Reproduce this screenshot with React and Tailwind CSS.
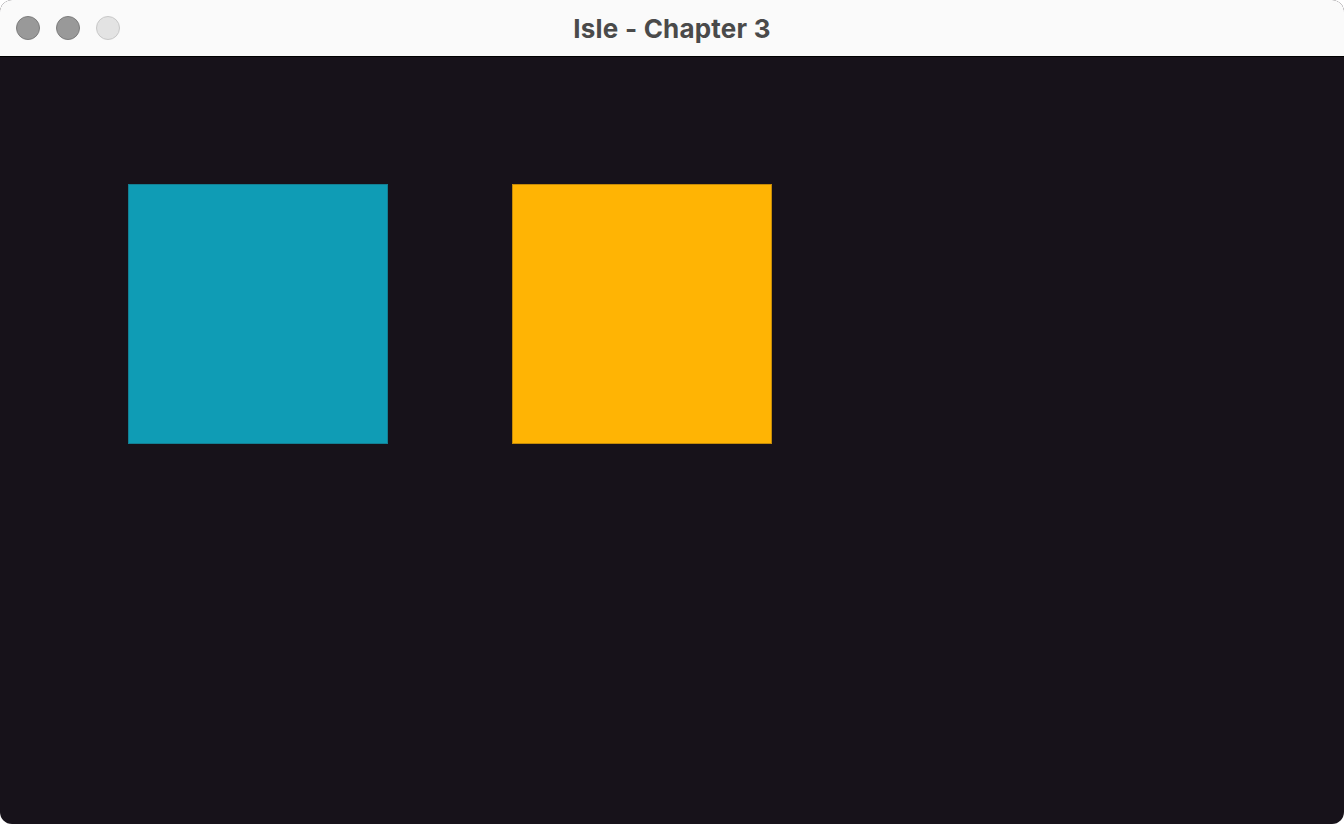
export default function App() {
  return (
    <div className="w-[1344px] h-[824px] bg-white">
      <div className="flex h-full flex-col overflow-hidden rounded-[12px] bg-[#17121a]">
        <div className="relative flex h-[57px] shrink-0 items-center justify-center border-b border-black bg-[#fafafa]">
          <div className="absolute left-[16px] top-[16px] flex gap-[16px]">
            <div className="h-[24px] w-[24px] rounded-full border border-[#7d7d7d] bg-[#999999]"></div>
            <div className="h-[24px] w-[24px] rounded-full border border-[#7d7d7d] bg-[#999999]"></div>
            <div className="h-[24px] w-[24px] rounded-full border border-[#c8c8c8] bg-[#e3e3e3]"></div>
          </div>
          <h1 className="font-['Inter','Liberation_Sans',sans-serif] text-[26px] font-bold tracking-[0.2px] text-[#4a4a4a]">
            Isle - Chapter 3
          </h1>
        </div>
        <div className="flex flex-1 gap-[124px] pl-[128px] pt-[127px]">
          <div className="h-[260px] w-[260px] border border-[#137f93] bg-[#0f9cb5]"></div>
          <div className="h-[260px] w-[260px] border border-[#c48a08] bg-[#ffb404]"></div>
        </div>
      </div>
    </div>
  );
}
